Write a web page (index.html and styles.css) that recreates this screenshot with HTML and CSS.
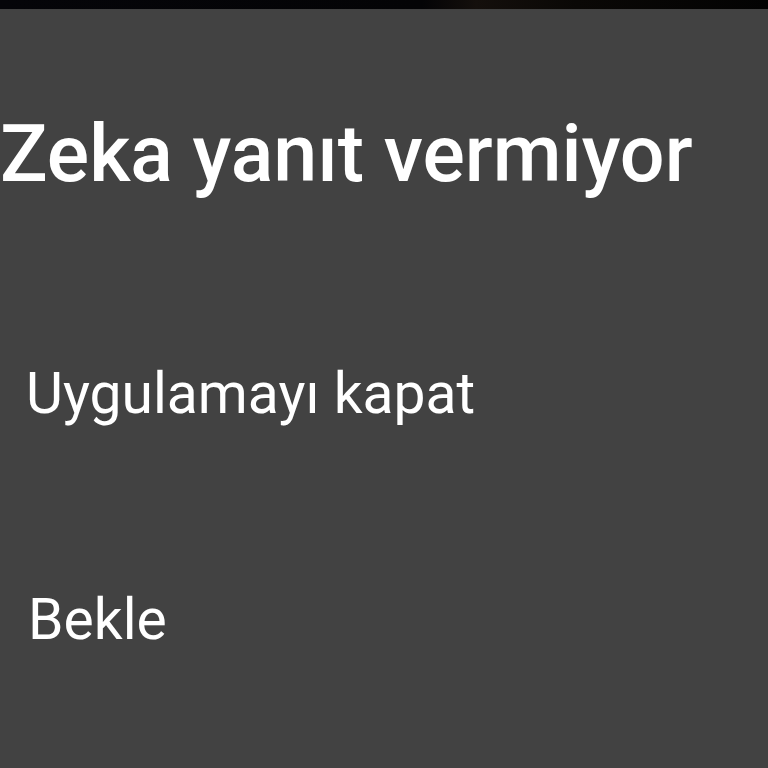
FILE: index.html
```html
<!DOCTYPE html>
<html>
<head>
  <title>Zeka yanıt vermiyor</title>
  <link rel="stylesheet" href="styles.css">
</head>
<body>
  <div class="status-bar"></div>
  <div class="dialog">
    <h1 class="dialog-title">Zeka yanıt vermiyor</h1>
    <div class="dialog-option option-close">Uygulamayı kapat</div>
    <div class="dialog-option option-wait">Bekle</div>
  </div>
</body>
</html>
```

FILE: styles.css
```css
body {
  margin: 0;
  background-color: #424242;
  font-family: Roboto, "Noto Sans", sans-serif;
  color: #fff;
  overflow: hidden;
}

.status-bar {
  height: 9px;
  background: linear-gradient(90deg, #050509 0%, #040406 55%, #140f0c 62%, #0a0806 75%, #030303 100%);
}

.dialog-title {
  margin: 0;
  padding-top: 95px;
  font-size: 79px;
  font-weight: 500;
  line-height: 100px;
  white-space: nowrap;
}

.dialog-option {
  padding-left: 26px;
  font-size: 57px;
  line-height: 80px;
}

.option-close {
  margin-top: 150px;
}

.option-wait {
  margin-top: 146px;
  padding-left: 28px;
}
```
